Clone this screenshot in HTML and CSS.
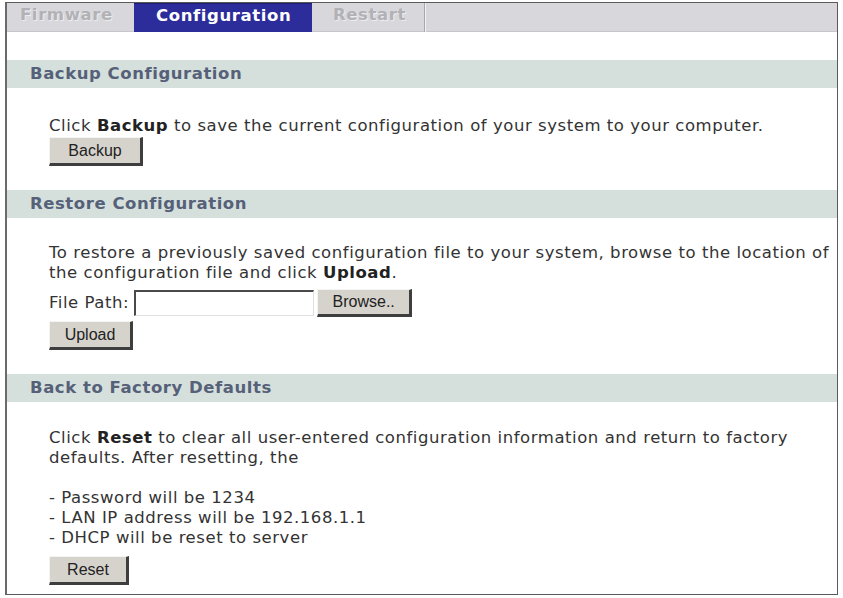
FILE: index.html
```html
<!DOCTYPE html>
<html>
<head>
<meta charset="utf-8">
<link rel="stylesheet" href="styles.css">
</head>
<body>
<div class="page">
  <div class="frame">
    <div class="tabs">
      <div class="tab tab-firmware">Firmware</div>
      <div class="tab tab-config active">Configuration</div>
      <div class="tab tab-restart">Restart</div>
    </div>

    <div class="header first">Backup Configuration</div>
    <div class="content backup">
      <p class="line">Click <b>Backup</b> to save the current configuration of your system to your computer.</p>
      <button class="btn btn-backup">Backup</button>
    </div>

    <div class="header">Restore Configuration</div>
    <div class="content restore">
      <p class="line">To restore a previously saved configuration file to your system, browse to the location of<br>the configuration file and click <b>Upload</b>.</p>
      <div class="filerow">
        <span class="label">File Path:</span>
        <span class="field"></span>
        <button class="btn btn-browse">Browse..</button>
      </div>
      <button class="btn btn-upload">Upload</button>
    </div>

    <div class="header">Back to Factory Defaults</div>
    <div class="content reset">
      <p class="line">Click <b>Reset</b> to clear all user-entered configuration information and return to factory<br>defaults. After resetting, the</p>
      <p class="line list"><br>- Password will be 1234<br>- LAN IP address will be 192.168.1.1<br>- DHCP will be reset to server</p>
      <button class="btn btn-reset">Reset</button>
    </div>
  </div>
</div>
</body>
</html>
```

FILE: styles.css
```css
html, body {
  margin: 0;
  padding: 0;
  background: #ffffff;
}

.page {
  padding: 2px 5px 0 5px;
}

.frame {
  width: 833px;
  height: 593px;
  border: 1px solid #5a5a5a;
  border-left: 2px solid #6a6a6a;
  box-sizing: border-box;
  font-family: "DejaVu Sans", Verdana, sans-serif;
  font-size: 16.5px;
  letter-spacing: 0.55px;
  color: #333333;
  background: #ffffff;
}

.tabs {
  display: flex;
  height: 29px;
  background: #d8d8dc;
  border-bottom: 1px solid #c6c6cc;
  box-sizing: border-box;
}

.tab {
  box-sizing: border-box;
  height: 29px;
  line-height: 24px;
  font-weight: bold;
  font-size: 16.5px;
  letter-spacing: 0.6px;
  color: #b2b2b6;
  text-shadow: 1px 1px 0 #ececee;
  padding-left: 13px;
  white-space: nowrap;
}

.tab-firmware {
  width: 127px;
}

.tab-config {
  width: 178px;
  padding-left: 22px;
}

.tab-restart {
  width: 113px;
  padding-left: 21px;
  border-right: 1px solid #a8a8ac;
  box-shadow: 1px 0 0 #f2f2f2;
}

.tab.active {
  background: #2c2c9a;
  color: #ffffff;
  text-shadow: none;
  border-top: 1px solid #1c1c70;
}

.header {
  height: 28px;
  line-height: 28px;
  background: #d5e0dc;
  color: #566079;
  font-weight: bold;
  padding-left: 23px;
  margin-top: 24px;
}

.header.first {
  margin-top: 28px;
}

.content {
  padding-left: 42px;
}

.line {
  margin: 0;
  line-height: 20px;
  white-space: nowrap;
}

.line b {
  color: #222222;
}

.backup .line {
  margin-top: 28px;
}

.restore .line {
  margin-top: 25px;
}

.reset .line:first-child {
  margin-top: 26px;
}

.btn {
  display: block;
  box-sizing: border-box;
  height: 29px;
  padding: 0;
  font-family: "Liberation Sans", Arial, sans-serif;
  font-size: 16px;
  letter-spacing: 0;
  color: #222222;
  background: #d6d3cc;
  border-style: solid;
  border-width: 1px 3px 3px 1px;
  border-color: #f4f4f2 #3e3e3e #3e3e3e #f4f4f2;
}

.btn-backup {
  width: 94px;
  margin-top: 1px;
}

.filerow {
  display: flex;
  align-items: center;
  margin-top: 6px;
  height: 27px;
}

.label {
  margin-right: 5px;
}

.field {
  display: block;
  box-sizing: border-box;
  width: 180px;
  height: 26px;
  background: #ffffff;
  border-style: solid;
  border-width: 2px 1px 1px 2px;
  border-color: #4a4a4a #e0e0e0 #e0e0e0 #4a4a4a;
}

.btn-browse {
  display: inline-block;
  width: 95px;
  height: 28px;
  margin-left: 3px;
}

.btn-upload {
  width: 84px;
  height: 29px;
  margin-top: 5px;
}

.btn-reset {
  width: 80px;
  height: 29px;
  margin-top: 8px;
}
```
